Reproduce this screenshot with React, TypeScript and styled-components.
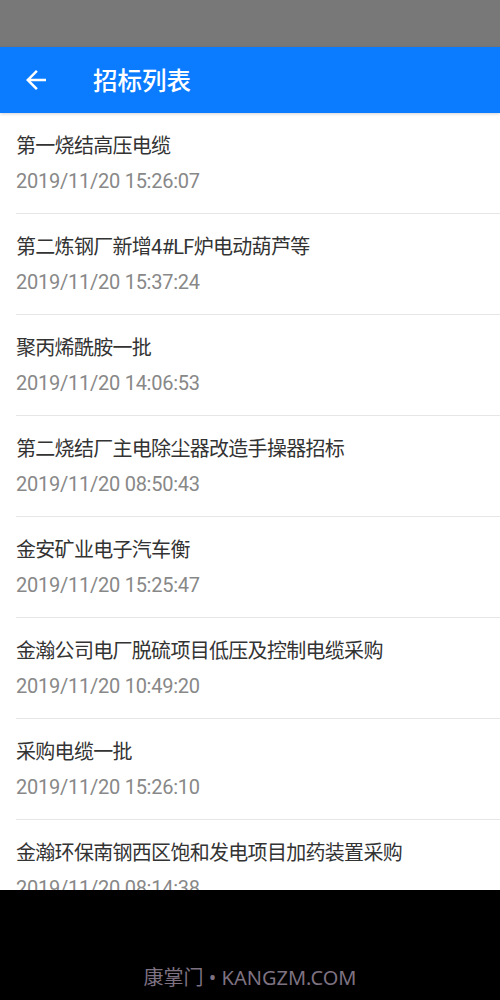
import React from "react";
import styled, { createGlobalStyle } from "styled-components";

const GlobalStyle = createGlobalStyle`
  html, body { margin: 0; padding: 0; background: #ffffff; }
  body { font-family: Roboto, "Noto Sans CJK SC", sans-serif; }
  * { box-sizing: border-box; }
`;

const Screen = styled.div`
  width: 500px;
  height: 1000px;
  display: flex;
  flex-direction: column;
  overflow: hidden;
  background: #ffffff;
`;

const StatusBar = styled.div`
  height: 47px;
  flex: none;
  background: #787878;
`;

const Header = styled.header`
  height: 66px;
  flex: none;
  display: flex;
  align-items: center;
  background: #0b7cff;
  box-shadow: 0 1px 3px rgba(0, 0, 0, 0.18);
  position: relative;
  z-index: 1;
`;

const BackButton = styled.button`
  width: 30px;
  height: 30px;
  margin-left: 21px;
  padding: 0;
  border: none;
  background: transparent;
  display: flex;
  align-items: center;
  justify-content: center;
  color: #ffffff;
`;

const Title = styled.h1`
  margin: 0 0 0 42px;
  font-family: "Noto Sans CJK SC", sans-serif;
  font-size: 24.5px;
  font-weight: 500;
  color: #ffffff;
  line-height: 1;
`;

const List = styled.ul`
  flex: 1;
  margin: 0;
  padding: 0;
  list-style: none;
  overflow: hidden;
`;

const Row = styled.li`
  height: 101px;
  margin-left: 16px;
  padding: 21px 16px 0 0;
  border-bottom: 1px solid #e6e6e6;
  display: flex;
  flex-direction: column;
`;

const ItemTitle = styled.div`
  font-family: Roboto, "Noto Sans CJK SC", sans-serif;
  font-size: 20px;
  letter-spacing: -0.7px;
  line-height: 24px;
  color: #333333;
  white-space: nowrap;
`;

const ItemDate = styled.div`
  margin-top: 11px;
  font-family: Roboto, sans-serif;
  font-size: 20px;
  letter-spacing: -0.25px;
  line-height: 24px;
  color: #888888;
`;

const Footer = styled.footer`
  height: 110px;
  flex: none;
  background: #000000;
  display: flex;
  align-items: flex-end;
  justify-content: center;
  padding-bottom: 9px;
`;

const Watermark = styled.div`
  font-family: "Noto Sans", "Noto Sans CJK SC", sans-serif;
  font-size: 20px;
  line-height: 26px;
  color: #7e7282;
`;

const items = [
  { title: "第一烧结高压电缆", date: "2019/11/20 15:26:07" },
  { title: "第二炼钢厂新增4#LF炉电动葫芦等", date: "2019/11/20 15:37:24" },
  { title: "聚丙烯酰胺一批", date: "2019/11/20 14:06:53" },
  { title: "第二烧结厂主电除尘器改造手操器招标", date: "2019/11/20 08:50:43" },
  { title: "金安矿业电子汽车衡", date: "2019/11/20 15:25:47" },
  { title: "金瀚公司电厂脱硫项目低压及控制电缆采购", date: "2019/11/20 10:49:20" },
  { title: "采购电缆一批", date: "2019/11/20 15:26:10" },
  { title: "金瀚环保南钢西区饱和发电项目加药装置采购", date: "2019/11/20 08:14:38" },
];

export default function App() {
  return (
    <>
      <GlobalStyle />
      <Screen>
        <StatusBar />
        <Header>
          <BackButton aria-label="返回">
            <svg width="30" height="30" viewBox="0 0 24 24" fill="currentColor">
              <path d="M20 11H7.83l5.59-5.59L12 4l-8 8 8 8 1.41-1.41L7.83 13H20v-2z" />
            </svg>
          </BackButton>
          <Title>招标列表</Title>
        </Header>
        <List>
          {items.map((it) => (
            <Row key={it.title}>
              <ItemTitle>{it.title}</ItemTitle>
              <ItemDate>{it.date}</ItemDate>
            </Row>
          ))}
        </List>
        <Footer>
          <Watermark>康掌门 • KANGZM.COM</Watermark>
        </Footer>
      </Screen>
    </>
  );
}
